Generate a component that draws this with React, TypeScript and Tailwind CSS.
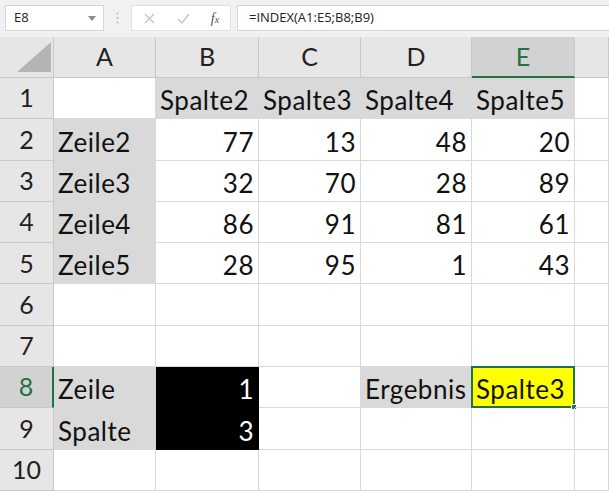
import React from "react";

type Cell = {
  v?: string;
  right?: boolean;
  fill?: "gray" | "black" | "yellow";
};

const COLS = ["A", "B", "C", "D", "E", "F"];
const COL_W = ["w-[102px]", "w-[103px]", "w-[102px]", "w-[111px]", "w-[103px]", "w-[34px]"];

const n = (v: string): Cell => ({ v, right: true });
const g = (v?: string): Cell => ({ v, fill: "gray" });

const ROWS: Cell[][] = [
  [{}, g("Spalte2"), g("Spalte3"), g("Spalte4"), g("Spalte5"), {}],
  [g("Zeile2"), n("77"), n("13"), n("48"), n("20"), {}],
  [g("Zeile3"), n("32"), n("70"), n("28"), n("89"), {}],
  [g("Zeile4"), n("86"), n("91"), n("81"), n("61"), {}],
  [g("Zeile5"), n("28"), n("95"), n("1"), n("43"), {}],
  [{}, {}, {}, {}, {}, {}],
  [{}, {}, {}, {}, {}, {}],
  [g("Zeile"), { v: "1", right: true, fill: "black" }, {}, g("Ergebnis"), { v: "Spalte3", fill: "yellow" }, {}],
  [g("Spalte"), { v: "3", right: true, fill: "black" }, {}, {}, {}, {}],
  [{}, {}, {}, {}, {}, {}],
];

const FILL = {
  gray: "bg-[#d9d9d9] border-[#d9d9d9]",
  black: "bg-black border-black text-white",
  yellow: "bg-[#ffff00] border-[#d4d4d4]",
};

function FormulaBar() {
  return (
    <div className="h-[37px] bg-[#f1f1f1] flex items-start pt-[5px] pl-[5px] font-['Open_Sans',sans-serif] text-[13px] text-[#222]">
      <div className="w-[99px] h-[26px] bg-white border border-[#d6d6d6] flex items-center pl-[8px] pr-[7px]">
        <span className="flex-1">E8</span>
        <svg width="8" height="5" viewBox="0 0 8 5">
          <path d="M0 0h8L4 5z" fill="#8a8a8a" />
        </svg>
      </div>
      <div className="w-[27px] h-[26px] flex items-center justify-center">
        <svg width="3" height="12" viewBox="0 0 3 12">
          <circle cx="1.5" cy="1.5" r="1" fill="#b8b8b8" />
          <circle cx="1.5" cy="6" r="1" fill="#b8b8b8" />
          <circle cx="1.5" cy="10.5" r="1" fill="#b8b8b8" />
        </svg>
      </div>
      <div className="w-[100px] h-[26px] bg-white border border-[#e2e2e2] flex items-center">
        <div className="w-[34px] flex justify-center">
          <svg width="11" height="11" viewBox="0 0 11 11">
            <path d="M1 1l9 9M10 1l-9 9" stroke="#c4c4c4" strokeWidth="1.3" />
          </svg>
        </div>
        <div className="w-[34px] flex justify-center">
          <svg width="13" height="11" viewBox="0 0 13 11">
            <path d="M1 6l4 4 7-9" stroke="#c4c4c4" strokeWidth="1.3" fill="none" />
          </svg>
        </div>
        <div className="w-[30px] flex justify-center font-['Liberation_Serif',serif] italic text-[14px] text-[#555]">
          f<span className="text-[10px] mt-[4px]">x</span>
        </div>
      </div>
      <div className="ml-[6px] flex-1 h-[26px] bg-white border border-[#d6d6d6] border-r-0 flex items-center pl-[11px]">
        =INDEX(A1:E5;B8;B9)
      </div>
    </div>
  );
}

function HeaderRow() {
  return (
    <div className="flex h-[41px] bg-[#e6e6e6] font-['Lato',sans-serif] text-[25px] text-[#222]">
      <div className="w-[54px] shrink-0 border-r border-b border-[#c8c8c8] flex items-end justify-end pr-[2px] pb-[5px]">
        <svg width="34" height="30" viewBox="0 0 34 30">
          <path d="M34 0V30H0z" fill="#b4b4b4" />
        </svg>
      </div>
      {COLS.map((c, i) => {
        const sel = c === "E";
        return (
          <div
            key={c}
            className={`${COL_W[i]} shrink-0 flex items-center justify-center border-r ${
              sel
                ? "bg-[#d2d2d2] text-[#217346] border-b-2 border-b-[#217346] border-r-[#c8c8c8]"
                : "border-b border-[#c8c8c8]"
            }`}
          >
            {c === "F" ? "" : c}
          </div>
        );
      })}
    </div>
  );
}

export default function App() {
  return (
    <div className="w-[609px] h-[491px] overflow-hidden bg-white select-none">
      <FormulaBar />
      <HeaderRow />
      {ROWS.map((row, r) => {
        const sel = r === 7;
        return (
          <div key={r} className="flex h-[41.3px] font-['Lato',sans-serif] text-[26px] text-[#111]">
            <div
              className={`w-[54px] shrink-0 flex items-center justify-center border-b text-[25px] ${
                sel
                  ? "bg-[#d2d2d2] text-[#217346] border-r-2 border-r-[#217346] border-b-[#c8c8c8]"
                  : "bg-[#e6e6e6] text-[#222] border-r border-[#c8c8c8]"
              }`}
            >
              {r + 1}
            </div>
            {row.map((cell, c) => {
              const active = r === 7 && c === 4;
              return (
                <div
                  key={c}
                  className={`${COL_W[c]} shrink-0 relative flex items-end pb-[5px] whitespace-nowrap tracking-[0.5px] border-r border-b ${
                    cell.fill ? FILL[cell.fill] : "border-[#d9d9d9]"
                  } ${cell.right ? "justify-end pr-[4px]" : "pl-[4px]"}`}
                >
                  {active && (
                    <div className="absolute -left-px -top-px -right-px -bottom-px border-2 border-[#217346]">
                      <div className="absolute -right-[4px] -bottom-[4px] w-[6px] h-[6px] bg-[#217346] border border-white" />
                    </div>
                  )}
                  <span className="relative leading-none">{cell.v}</span>
                </div>
              );
            })}
          </div>
        );
      })}
    </div>
  );
}
